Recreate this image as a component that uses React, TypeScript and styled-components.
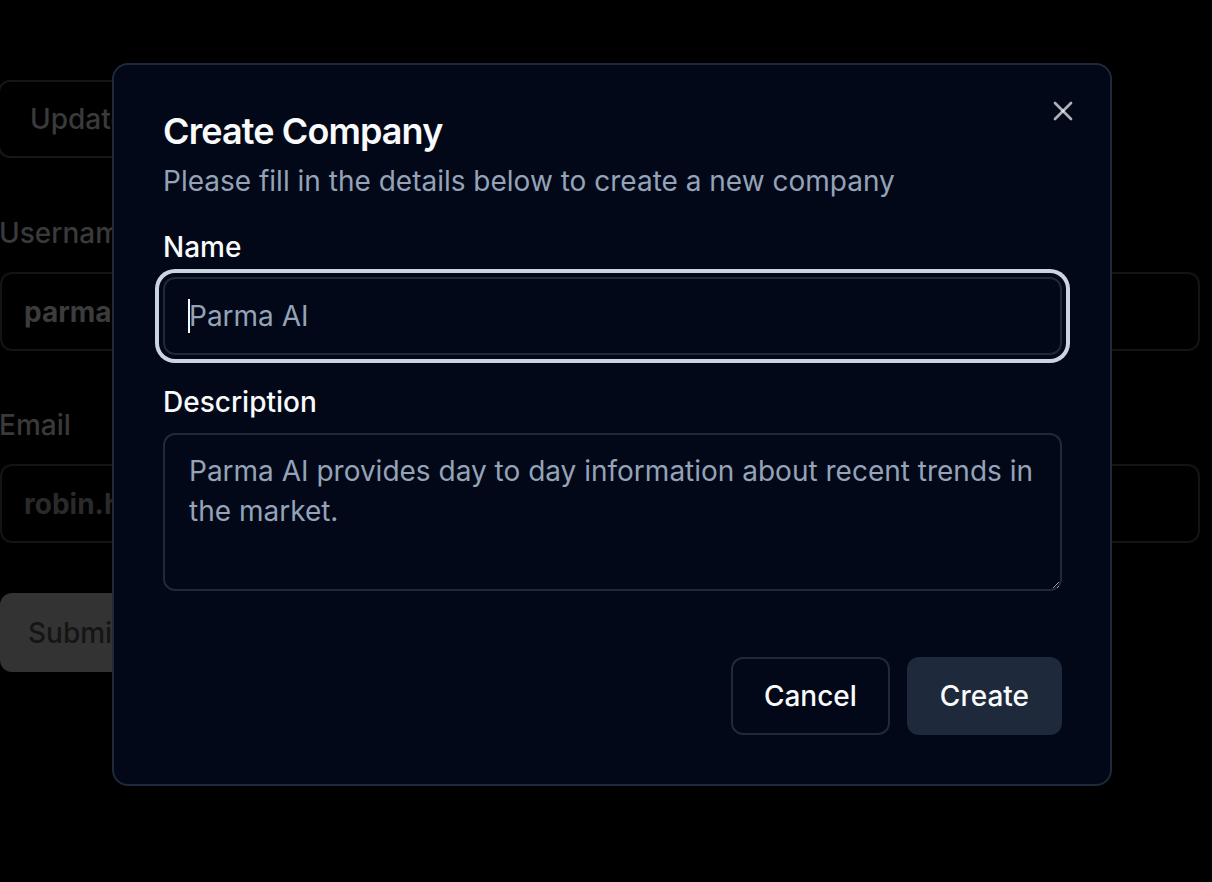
import React from "react";
import styled, { createGlobalStyle } from "styled-components";
import { X } from "lucide-react";

const Global = createGlobalStyle`
  html, body { margin: 0; padding: 0; background: #000; }
  body { font-family: Inter, "Noto Sans", sans-serif; -webkit-font-smoothing: antialiased; }
  * { box-sizing: border-box; }
`;

const Page = styled.div`
  width: 1200px;
  padding-top: 80px;
  display: flex;
  flex-direction: column;
  align-items: flex-start;
`;

const GhostButton = styled.button`
  height: 78px;
  margin-left: -2px;
  padding: 0 30px;
  border: 2px solid #161616;
  border-radius: 12px;
  background: #000;
  color: #3a3a3a;
  font-family: inherit;
  font-size: 28px;
  font-weight: 500;
`;

const BgField = styled.div<{ $top: number }>`
  width: 100%;
  margin-top: ${(p) => p.$top}px;
  display: flex;
  flex-direction: column;
  gap: 25px;
`;

const BgLabel = styled.label`
  margin-left: -1px;
  font-size: 28px;
  line-height: 28px;
  font-weight: 500;
  color: #3a3a3a;
`;

const BgInput = styled.div<{ $color: string }>`
  height: 79px;
  width: 100%;
  border: 2px solid #141414;
  border-radius: 12px;
  padding: 0 22px;
  display: flex;
  align-items: center;
  font-size: 28px;
  font-weight: 700;
  color: ${(p) => p.$color};
`;

const SubmitButton = styled.button`
  margin-top: 50px;
  height: 79px;
  padding: 0 28px;
  border: none;
  border-radius: 12px;
  background: #333;
  color: #151515;
  font-family: inherit;
  font-size: 28px;
  font-weight: 500;
`;

const Dialog = styled.div`
  position: fixed;
  left: 112px;
  top: 63px;
  width: 1000px;
  height: 723px;
  background: #020817;
  border: 2px solid #1e293b;
  border-radius: 16px;
  padding: 48px 48px 48px 49px;
  display: flex;
  flex-direction: column;
`;

const Close = styled.button`
  position: absolute;
  top: 30px;
  right: 31px;
  width: 32px;
  height: 32px;
  padding: 0;
  border: none;
  background: transparent;
  color: rgba(248, 250, 252, 0.7);
  display: flex;
`;

const Header = styled.div`
  display: flex;
  flex-direction: column;
  gap: 12px;
`;

const Title = styled.h2`
  margin: 0;
  font-size: 36px;
  line-height: 36px;
  font-weight: 600;
  letter-spacing: -0.025em;
  color: #f8fafc;
`;

const Description = styled.p`
  margin: 0;
  font-size: 28px;
  line-height: 40px;
  color: #94a3b8;
`;

const Field = styled.div<{ $top: number; $gap: number }>`
  margin-top: ${(p) => p.$top}px;
  display: flex;
  flex-direction: column;
  gap: ${(p) => p.$gap}px;
`;

const Label = styled.label`
  font-size: 28px;
  line-height: 28px;
  font-weight: 500;
  color: #f8fafc;
`;

const InputWrap = styled.div`
  position: relative;
`;

const Caret = styled.span`
  position: absolute;
  left: 25px;
  top: 22px;
  width: 2px;
  height: 34px;
  background: #f8fafc;
`;

const Input = styled.input`
  height: 78px;
  width: 100%;
  padding: 0 24px;
  border: 2px solid #1e293b;
  border-radius: 12px;
  background: #020817;
  color: #f8fafc;
  font-family: inherit;
  font-size: 28px;
  outline: none;
  box-shadow: 0 0 0 4px #020817, 0 0 0 8px #cbd5e1;
  caret-color: transparent;
  &::placeholder { color: #94a3b8; }
`;

const TextArea = styled.textarea`
  height: 158px;
  width: 100%;
  padding: 16px 24px;
  border: 2px solid #1e293b;
  border-radius: 12px;
  background: #020817;
  color: #f8fafc;
  font-family: inherit;
  font-size: 28px;
  line-height: 40px;
  resize: vertical;
  outline: none;
  &::placeholder { color: #94a3b8; }
`;

const Footer = styled.div`
  margin-top: 66px;
  display: flex;
  justify-content: flex-end;
  gap: 17px;
`;

const Button = styled.button<{ $variant: "outline" | "secondary" }>`
  height: 78px;
  padding: 0 31px;
  border-radius: 12px;
  border: 2px solid #1e293b;
  background: ${(p) => (p.$variant === "outline" ? "#020817" : "#1e293b")};
  color: #f8fafc;
  font-family: inherit;
  font-size: 28px;
  font-weight: 500;
`;

export default function App() {
  return (
    <>
      <Global />
      <Page>
        <GhostButton>Update</GhostButton>
        <BgField $top={61}>
          <BgLabel>Username</BgLabel>
          <BgInput $color="#3c3c3c">parma.ai</BgInput>
        </BgField>
        <BgField $top={60}>
          <BgLabel>Email</BgLabel>
          <BgInput $color="#2a2a2a">robin.hood@parma.ai</BgInput>
        </BgField>
        <SubmitButton>Submit</SubmitButton>
      </Page>
      <Dialog role="dialog">
        <Close aria-label="Close">
          <X size={32} strokeWidth={2} />
        </Close>
        <Header>
          <Title>Create Company</Title>
          <Description>Please fill in the details below to create a new company</Description>
        </Header>
        <Field $top={32} $gap={16}>
          <Label>Name</Label>
          <InputWrap>
            <Input placeholder="Parma AI" />
            <Caret />
          </InputWrap>
        </Field>
        <Field $top={33} $gap={17}>
          <Label>Description</Label>
          <TextArea placeholder="Parma AI provides day to day information about recent trends in the market." />
        </Field>
        <Footer>
          <Button $variant="outline">Cancel</Button>
          <Button $variant="secondary">Create</Button>
        </Footer>
      </Dialog>
    </>
  );
}
